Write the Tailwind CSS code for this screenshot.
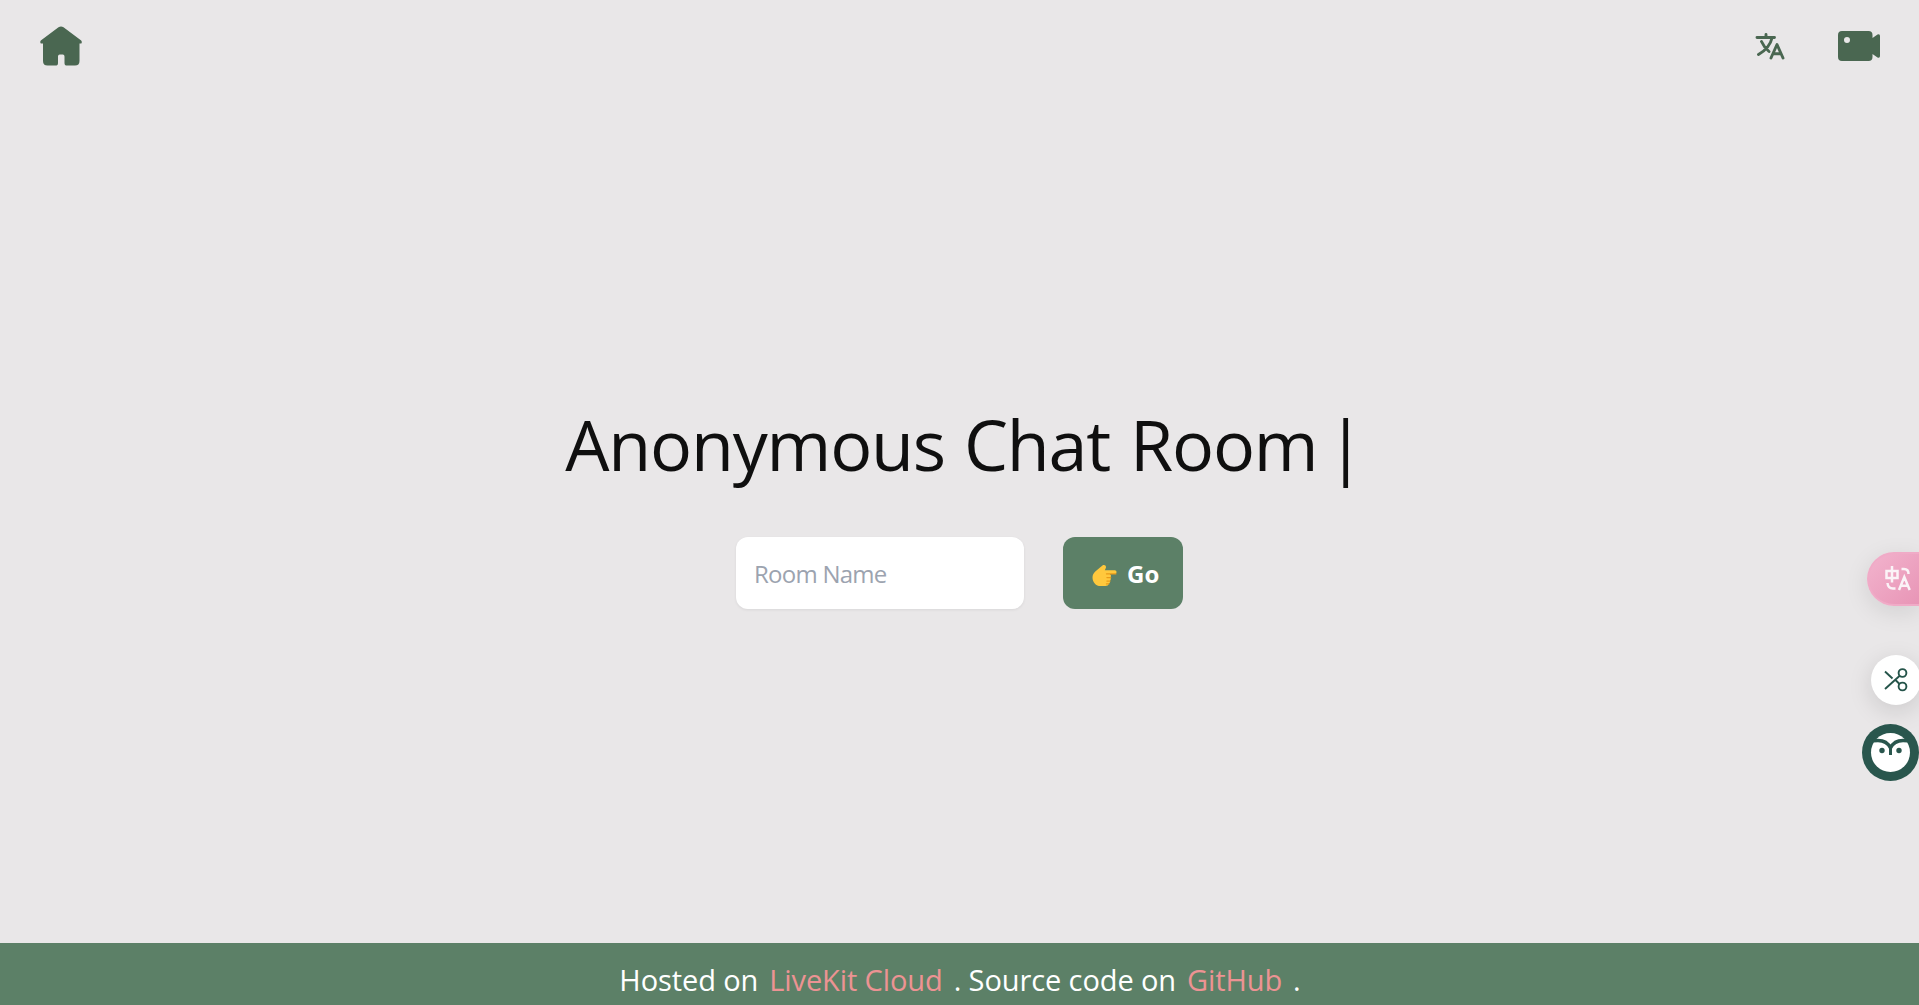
<!DOCTYPE html>
<html lang="en">
<head>
<meta charset="utf-8">
<title>Anonymous Chat Room</title>
<script src="https://cdn.jsdelivr.net/npm/@tailwindcss/browser@4"></script>
</head>
<body class="relative flex h-screen flex-col overflow-hidden bg-[#e9e7e8] font-['Segoe_UI','Open_Sans',sans-serif] text-[#0f0f0f]">
  <header class="flex h-[92px] shrink-0 items-center justify-between px-[39px] text-[#4a6751]">
    <a aria-label="Home">
      <svg class="h-[42px] w-[44px]" viewBox="0 0 44 42" fill="currentColor"><path d="M19.5 2.300Q22 .6 24.500 2.300L42.200 15.600Q43.500 17.200 42.400 18.600H40.500V36Q40.500 40.600 36 40.600H28Q25.500 40.600 25.500 38V31.500Q25.500 29.600 23.800 29.600H20.700Q19 29.600 19 31.500V38Q19 40.600 16.500 40.600H8.500Q4 40.600 4 36V18.600H1.800Q.5 17.200 1.800 15.600Z"/></svg>
    </a>
    <nav class="flex items-center gap-[53px]">
      <svg class="h-[30px] w-[30px]" viewBox="0 0 30 30" fill="none" stroke="currentColor" stroke-width="2.900" stroke-linecap="round" stroke-linejoin="round"><path d="M2 6.500H19.500M11 3.500V6.500M17 7C15.500 13.500 10.500 19.500 3.500 23.500M6.500 10.500C8 14 10.500 17.500 14 20.500M16 27L22 13.500L28 27M18.500 22.800H26"/></svg>
      <svg class="h-[30px] w-[42px]" viewBox="0 0 42 30" fill="currentColor"><path fill-rule="evenodd" d="M4 0H30.500Q34.500 0 34.500 4V7L39.500 3.500Q42 2.500 42 5V25Q42 27.500 39.500 26.500L34.500 23V26Q34.500 30 30.500 30H4Q0 30 0 26V4Q0 0 4 0ZM9 6A3 3 0 1 0 9 12A3 3 0 1 0 9 6Z"/></svg>
    </nav>
  </header>

  <main class="flex flex-1 flex-col items-center pt-[304px]">
    <h1 class="flex h-[96px] items-center pl-[10px] text-[70px] leading-[96px] tracking-[-1.2px] whitespace-pre"><span>Anonymous </span><span class="ml-[2px]">Chat </span><span class="ml-[3px]">Room</span><span class="ml-[9px]">|</span></h1>
    <form class="mt-[45px] flex gap-[39px]">
      <input class="h-[72px] w-[288px] rounded-xl bg-white px-[18px] text-2xl tracking-[-0.75px] shadow-[0_1px_3px_rgba(0,0,0,0.07)] placeholder:text-[#9ca3af]" placeholder="Room Name">
      <button type="button" class="flex h-[72px] w-[120px] items-center rounded-xl bg-[#5c8067] pl-[29px] text-2xl font-bold text-white">
        <svg class="mt-[4px] mr-[10px] h-[23px] w-[25px]" viewBox="0 0 26 24"><path fill="#ffc83d" d="M.5 14C.5 9 5 7 8 4L11.500 1Q15 .5 14.500 4L13.300 6.500H24Q26 7 25.500 9Q25 10.500 23.500 10.500H18.500Q20.500 11.500 19.500 14Q20 16 18.800 17.500Q19 20 17.500 20.500Q17 23 14 23H9C4 23 .5 19 .5 14Z"/><path fill="none" stroke="#e99a18" stroke-width="1.200" stroke-linecap="round" d="M25 10.300H15M19.500 14.200H15.500M18.800 17.800H15.500M17.500 20.800H15"/></svg>
        <span class="mt-[2px]">Go</span>
      </button>
    </form>
  </main>

  <footer class="flex h-[62px] shrink-0 items-center justify-center bg-[#5c8067] pt-[12px] pl-px text-[29px] leading-[48px] tracking-[-0.1px] whitespace-pre text-white">
    <span>Hosted on</span><a class="ml-[11px] text-[#ec9393]">LiveKit Cloud</a><span class="ml-[11px]">. Source code on</span><a class="ml-[11px] text-[#ec9393]">GitHub</a><span class="ml-[11px]">.</span>
  </footer>

  <aside class="absolute top-[552px] right-0 h-[240px] w-[58px]">
    <div class="absolute top-0 right-0 flex h-[54px] w-[52px] items-center rounded-l-full border-2 border-r-0 border-[#f0abc7] bg-linear-to-br from-[#f2b3cd] to-[#e895b6] pl-[15px] shadow-[0_6px_24px_rgba(0,0,0,0.10)]">
      <svg class="h-[26px] w-[28px]" viewBox="0 0 28 26" fill="none" stroke="#fbf3f7" stroke-width="2.500"><path d="M2.500 5H13.500V12H2.500ZM8 0V16.500M17.500 3H20Q24.500 3 24.500 8M3.500 17Q4 22.500 9 22.500H11.500M15 24L20.300 11L25.700 24M17 19.800H24"/></svg>
    </div>
    <div class="absolute top-[103px] -right-[2px] flex size-[50px] items-center justify-center rounded-full bg-white shadow-[0_6px_24px_rgba(0,0,0,0.13)]">
      <svg class="size-6" viewBox="0 0 24 24" fill="none" stroke="#25544a" stroke-width="1.900"><path d="M1 3.500L8.500 10.500M1 21L16 7.500M11.500 12L15.500 16"/><circle cx="18.500" cy="5" r="3.900"/><circle cx="18.500" cy="18.500" r="3.900"/></svg>
    </div>
    <svg class="absolute top-[172px] right-0 size-[57px]" viewBox="0 0 57 57"><circle cx="28.500" cy="28.500" r="28.500" fill="#29564d"/><circle cx="28.500" cy="28.500" r="19.500" fill="#fff"/><path d="M11 17Q24 14.500 28.500 24Q33 14.500 46 17" fill="none" stroke="#29564d" stroke-width="3.300"/><path d="M28.500 22V31" stroke="#29564d" stroke-width="3"/><circle cx="20" cy="26.500" r="2.700" fill="#29564d"/><circle cx="37" cy="26.500" r="2.700" fill="#29564d"/></svg>
  </aside>
</body>
</html>
